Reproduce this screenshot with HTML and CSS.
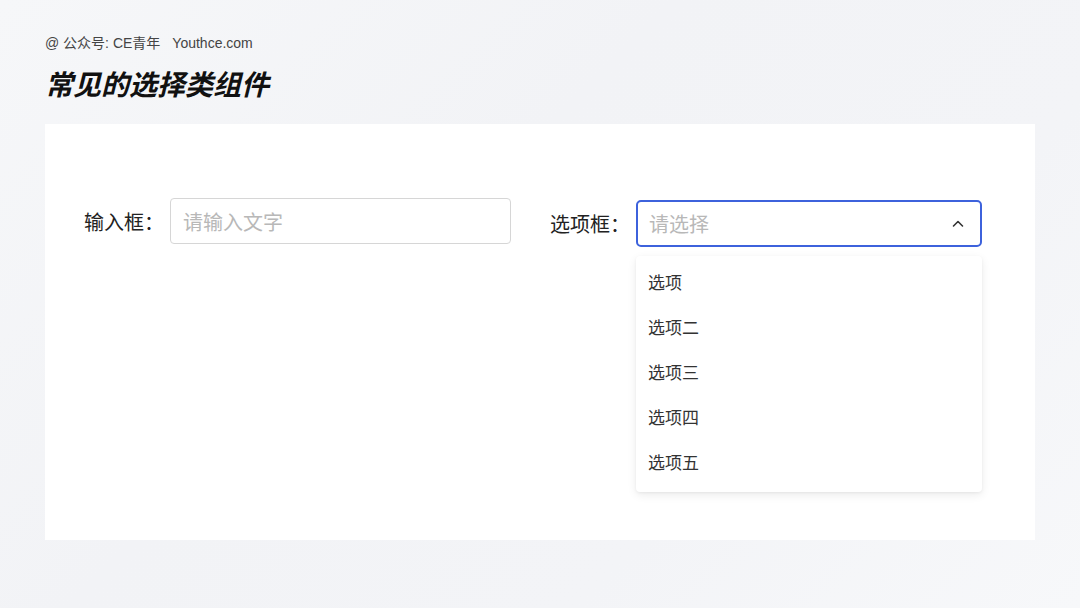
FILE: index.html
```html
<!DOCTYPE html>
<html lang="zh-CN">
<head>
    <meta charset="UTF-8">
    <meta name="viewport" content="width=device-width, initial-scale=1.0">
    <title>常见的选择类组件</title>
    <link rel="stylesheet" href="styles.css">
</head>
<body>
    <div class="page">
        <div class="credit">@ 公众号: CE青年<span class="site">Youthce.com</span></div>
        <h1>常见的选择类组件</h1>

        <div class="panel">
            <div class="form-row">
                <div class="field">
                    <label for="text">输入框：</label>
                    <input type="text" id="text" class="text-input" placeholder="请输入文字">
                </div>
                <div class="field">
                    <label>选项框：</label>
                    <div class="select">
                        <div class="select-box">
                            <span class="placeholder">请选择</span>
                            <svg class="chevron" width="14" height="14" viewBox="0 0 14 14">
                                <path d="M2.5 9 L7 4.5 L11.5 9" fill="none" stroke="#333" stroke-width="1.6" stroke-linecap="round" stroke-linejoin="round"/>
                            </svg>
                        </div>
                        <ul class="dropdown">
                            <li>选项</li>
                            <li>选项二</li>
                            <li>选项三</li>
                            <li>选项四</li>
                            <li>选项五</li>
                        </ul>
                    </div>
                </div>
            </div>
        </div>
    </div>
</body>
</html>
```

FILE: styles.css
```css
body {
    margin: 0;
    padding: 0;
    font-family: "Noto Sans CJK SC", "Noto Sans", sans-serif;
    background: linear-gradient(135deg, #f6f7f9 0%, #f2f3f6 40%, #f3f4f7 70%, #f7f8fa 100%);
    width: 1080px;
    height: 608px;
    overflow: hidden;
}

.page {
    padding: 34px 45px 0 45px;
}

.credit {
    font-family: "Liberation Sans", "Noto Sans CJK SC", sans-serif;
    font-size: 14px;
    line-height: 18px;
    color: #444;
}

.credit .site {
    margin-left: 12px;
}

h1 {
    margin: 11px 0 0 0;
    font-size: 28px;
    line-height: 40px;
    font-weight: 700;
    font-style: italic;
    color: #111;
}

.panel {
    margin-top: 21px;
    width: 990px;
    height: 416px;
    background-color: #fff;
    box-sizing: border-box;
    padding: 74px 0 0 39px;
}

.form-row {
    display: flex;
    align-items: flex-start;
}

.field {
    display: flex;
    align-items: center;
}

.field + .field {
    margin-left: 39px;
    margin-top: 2px;
}

.field label {
    font-size: 20px;
    color: #222;
    margin-right: 6px;
    white-space: nowrap;
}

.text-input {
    width: 341px;
    height: 46px;
    box-sizing: border-box;
    border: 1.5px solid #d6d6d6;
    border-radius: 4px;
    padding: 0 12px;
    font-family: inherit;
    font-size: 20px;
    color: #333;
    outline: none;
}

.text-input::placeholder {
    color: #b8b8b8;
}

.select {
    position: relative;
}

.select-box {
    width: 346px;
    height: 47px;
    box-sizing: border-box;
    border: 2px solid #3d62dc;
    border-radius: 5px;
    padding: 0 15px 0 11px;
    display: flex;
    align-items: center;
    justify-content: space-between;
}

.placeholder {
    font-size: 20px;
    color: #b8b8b8;
}

.dropdown {
    position: absolute;
    top: 56px;
    left: 0;
    width: 346px;
    margin: 0;
    padding: 3px 0 8px 0;
    box-sizing: border-box;
    list-style: none;
    background-color: #fff;
    border-radius: 4px;
    box-shadow: 0 3px 10px rgba(0, 0, 0, 0.08), 0 1px 3px rgba(0, 0, 0, 0.05);
}

.dropdown li {
    height: 45px;
    line-height: 45px;
    padding-left: 12px;
    font-size: 17px;
    color: #333;
}
```
